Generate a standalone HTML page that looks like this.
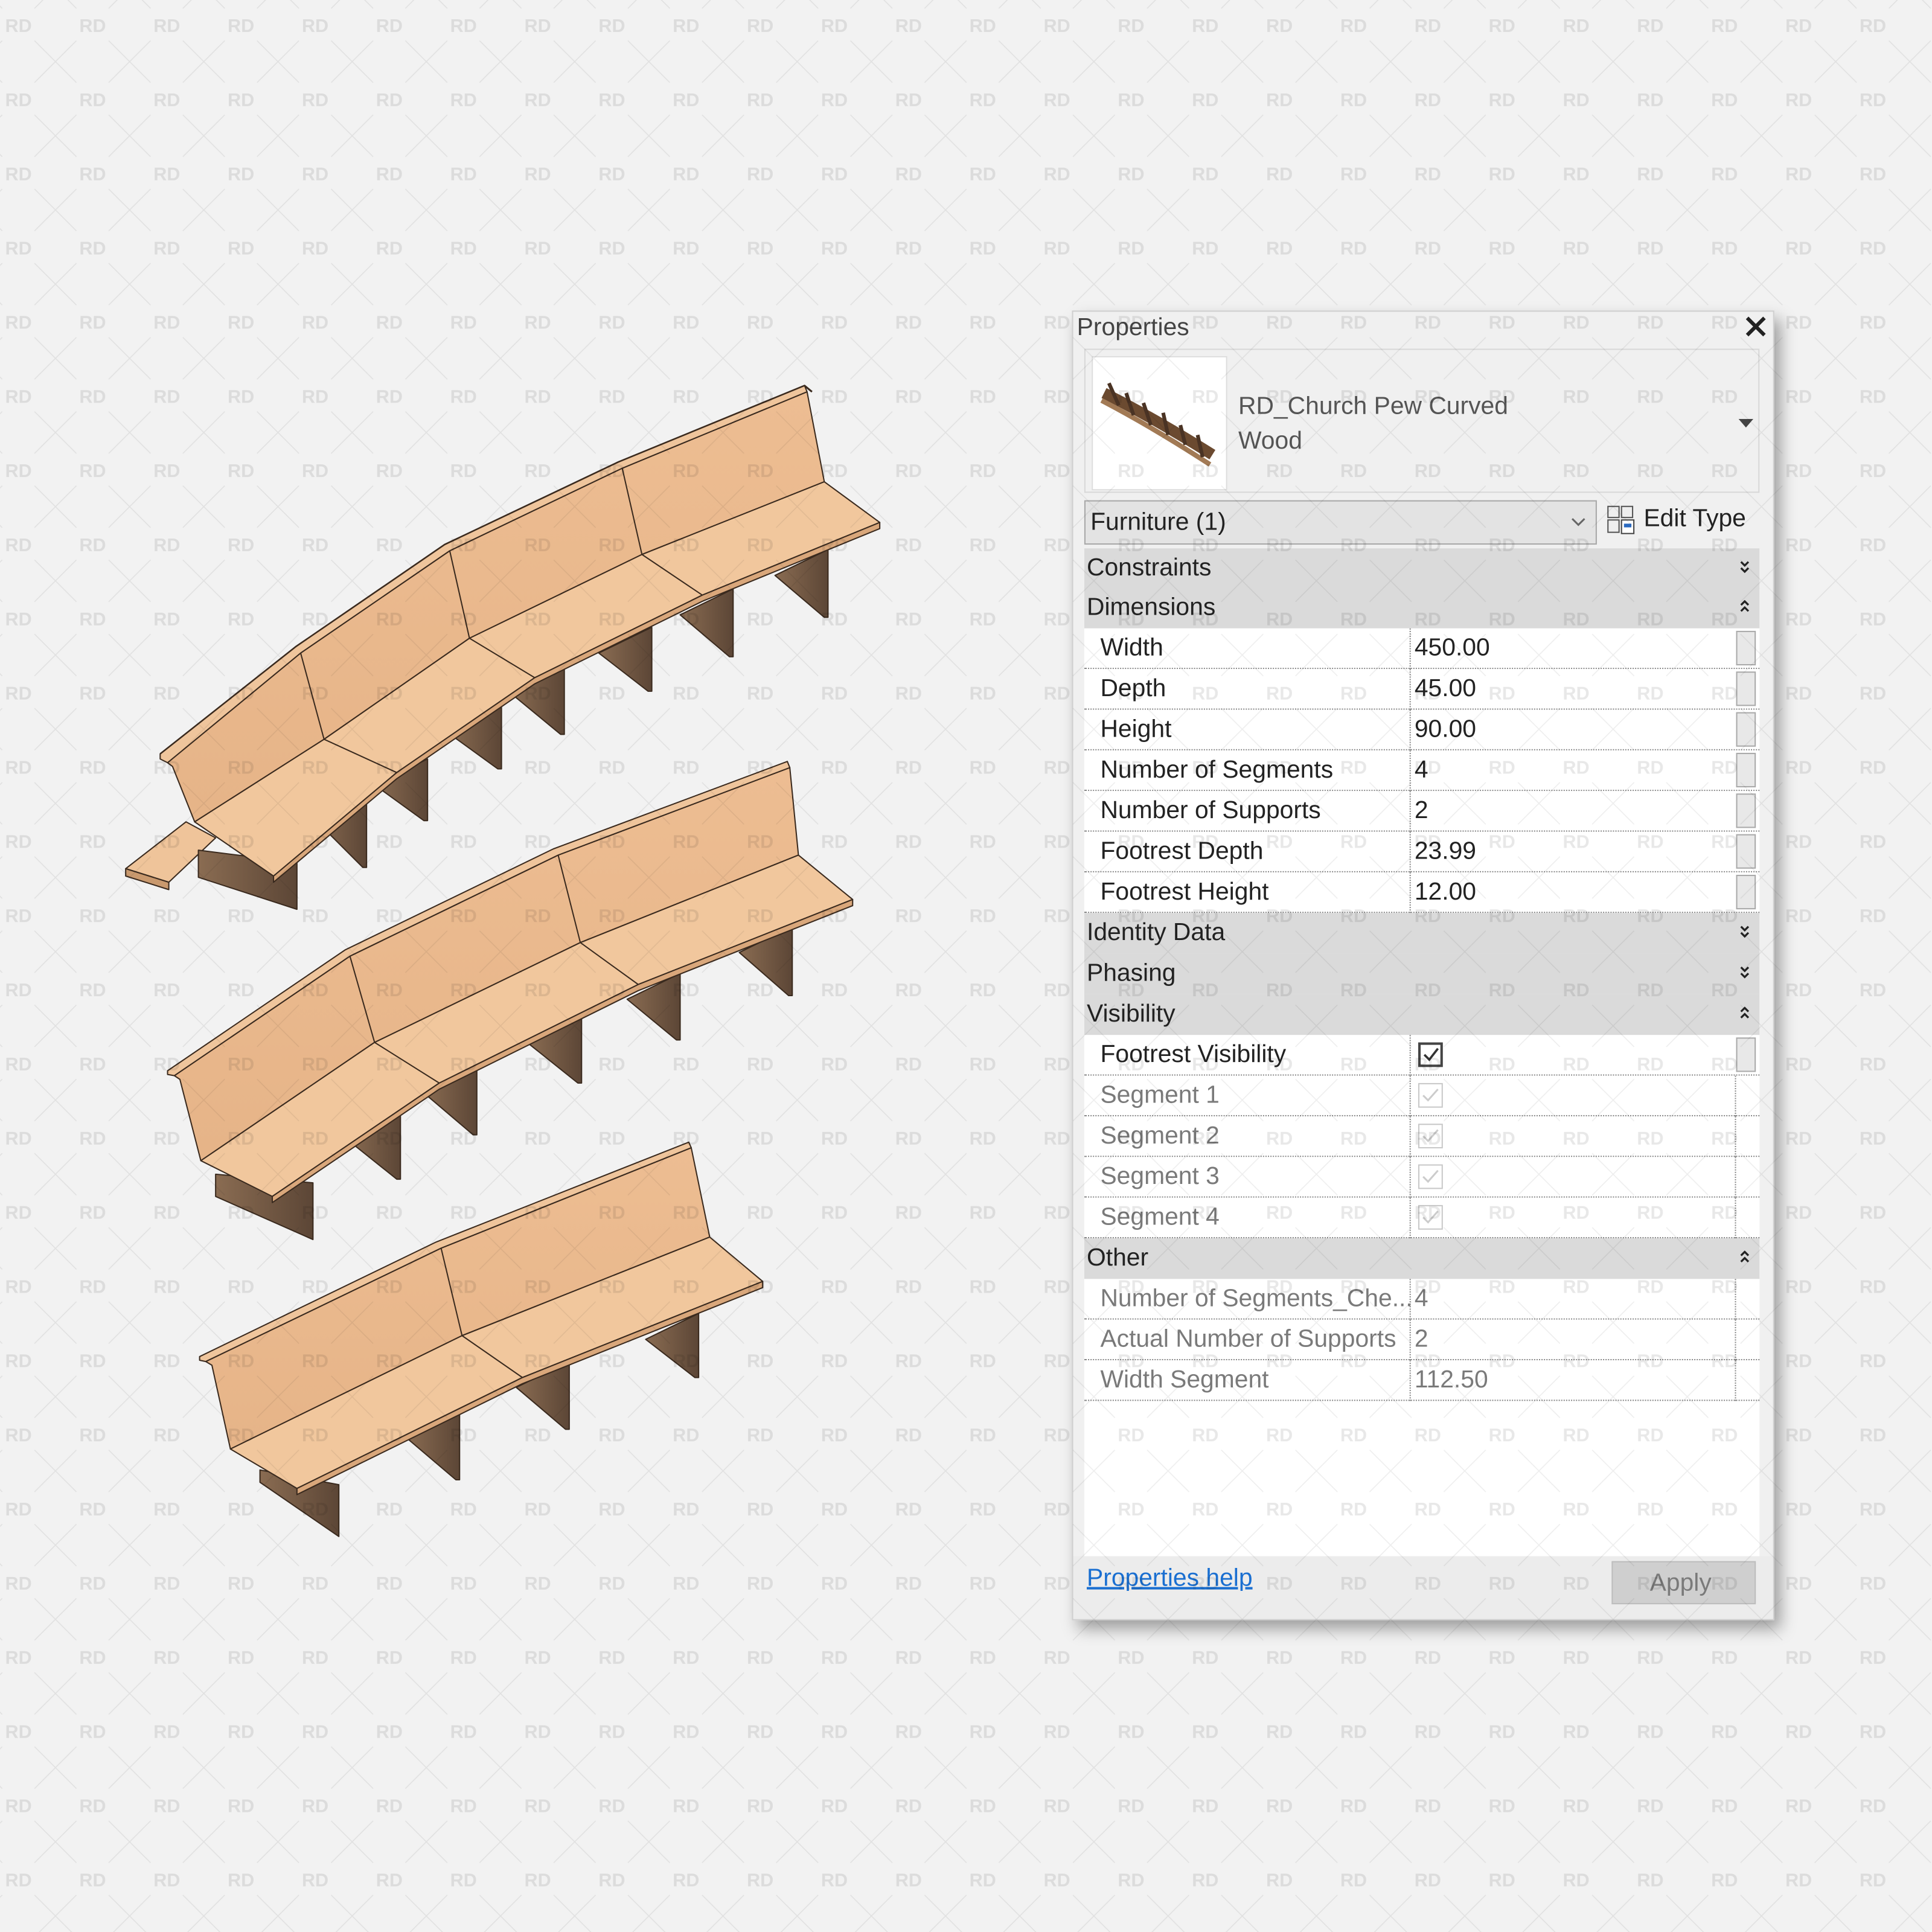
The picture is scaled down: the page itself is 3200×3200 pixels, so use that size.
<!DOCTYPE html>
<html><head><meta charset="utf-8">
<style>
html,body{margin:0;padding:0;background:#f2f2f2;}
body{width:3200px;height:3200px;overflow:hidden;position:relative;}
#stage{position:absolute;left:0;top:0;width:1568px;height:1568px;transform:scale(2.040816);transform-origin:0 0;font-family:"Liberation Sans",sans-serif;}
.a{position:absolute;}
.t{position:absolute;font-size:20px;line-height:33px;white-space:nowrap;color:#222;}
.cat{position:absolute;left:880px;width:548px;height:33px;background:#dadada;}
.cat span{position:absolute;left:2px;top:0;font-size:20px;line-height:33px;color:#222;}
.cat svg{position:absolute;right:8px;top:10px;}
.row{position:absolute;left:880px;width:548px;height:33px;background:#fff;border-bottom:1px dotted #888;box-sizing:border-box;}
.row .l{position:absolute;left:13px;top:0;font-size:20px;line-height:32px;color:#222;}
.row .v{position:absolute;left:268px;top:0;font-size:20px;line-height:32px;color:#222;}
.row .d{position:absolute;left:264px;top:0;height:33px;border-left:1px dotted #888;}
.row .d2{position:absolute;left:528px;top:0;height:33px;border-left:1px dotted #888;}
.row .sb{position:absolute;left:529px;top:2px;width:16px;height:28px;background:#e8e8e8;border:1px solid #aaa;box-sizing:border-box;}
.g .l,.g .v{color:#7a7a7a;}
.cb{position:absolute;left:271px;top:6px;width:20px;height:20px;box-sizing:border-box;border:2px solid #444;}
.cb.g2{border:1.5px solid #c8c8c8;}
</style></head>
<body>
<div id="stage">
<!-- pews -->
<svg class="a" style="left:0;top:0" width="1568" height="1568" viewBox="0 0 1568 1568">
<defs>
<linearGradient id="leg" x1="0" y1="0" x2="1" y2="0"><stop offset="0" stop-color="#8a6c52"/><stop offset="1" stop-color="#5c4636"/></linearGradient>
<linearGradient id="back" x1="0" y1="0" x2="0" y2="1"><stop offset="0" stop-color="#edbd92"/><stop offset="1" stop-color="#e6b488"/></linearGradient>
</defs>
<g stroke="#3a2a1e" stroke-width="1" stroke-linejoin="round">
<!-- pew 1 -->
<polygon points="102,705 151,667 175,680 137,716" fill="#efc49a"/>
<polygon points="102,705 137,716 137,722 102,711" fill="#c9996e"/>
<polygon points="161,690 241,700 241,738 161,712" fill="url(#leg)"/>
<g fill="url(#leg)">
<polygon points="254.5,664 297.5,643 297.5,704 294.5,704"/>
<polygon points="304,637 347,616 347,666 344,666"/>
<polygon points="364,595 407,574 407,624 404,624"/>
<polygon points="415,563 458,542 458,596 455,596"/>
<polygon points="486,530 529,509 529,561 526,561"/>
<polygon points="552,499 595,478 595,533 592,533"/>
<polygon points="629,467 672,446 672,501 669,501"/>
</g>
<polygon points="136,619 244,530 365,447 505,380 655,318 669,391 521,450 381,518 263,600 158,667 140,622" fill="url(#back)"/>
<polyline points="130,612 240,525 361,442 502,375 653,313 659,318" fill="none" stroke-width="1.5"/>
<polygon points="130,612 240,525 361,442 502,375 653,313 655,318 505,380 365,447 244,530 136,619 130,616" fill="#efc59c"/>
<line x1="244" y1="530" x2="263" y2="600"/><line x1="365" y1="447" x2="381" y2="518"/><line x1="505" y1="380" x2="521" y2="450"/>
<polygon points="158,667 263,600 381,518 521,450 669,391 714,424 570,483 434,550 322,627 222,711" fill="#f1c79d"/>
<polygon points="222,711 322,627 434,550 570,483 714,424 714,429 570,488 434,555 322,632 222,716" fill="#d9a77b"/>
<line x1="263" y1="600" x2="322" y2="627"/><line x1="381" y1="518" x2="434" y2="550"/><line x1="521" y1="450" x2="570" y2="483"/>
<!-- pew 2 -->
<polygon points="175,953 254,960 254,1006 175,971" fill="url(#leg)"/>
<g fill="url(#leg)">
<polygon points="282,925 325,904 325,957 322,957"/>
<polygon points="344,887 387,866 387,921 384,921"/>
<polygon points="429,847 472,826 472,879 469,879"/>
<polygon points="509,811 552,790 552,844 549,844"/>
<polygon points="600,773 643,752 643,808 640,808"/>
</g>
<polygon points="141.5,873 284,776 453,694 641,623 648,694 471,765 304,846 163,942 146,876" fill="url(#back)"/>
<polygon points="136,869 280,771 449,689 639,618 641,623 453,694 284,776 141.5,873 136,872" fill="#efc59c"/>
<line x1="284" y1="776" x2="304" y2="846"/><line x1="453" y1="694" x2="471" y2="765"/>
<polygon points="163,942 304,846 471,765 648,694 692,730 518,799 356.5,879 221,971" fill="#f1c79d"/>
<polygon points="221,971 356.5,879 518,799 692,730 692,735 518,804 356.5,884 221,976" fill="#d9a77b"/>
<line x1="304" y1="846" x2="356.5" y2="879"/><line x1="471" y1="765" x2="518" y2="799"/>
<!-- pew 3 -->
<polygon points="211,1193 275,1205 275,1247 211,1203" fill="url(#leg)"/>
<g fill="url(#leg)">
<polygon points="330,1167 373,1146 373,1201 370,1201"/>
<polygon points="419,1126 462,1105 462,1160 459,1160"/>
<polygon points="524,1087 567,1066 567,1118 564,1118"/>
</g>
<polygon points="167,1105 358,1013 561,931.5 576,1004 375,1084 187,1176 172,1108" fill="url(#back)"/>
<polygon points="162,1101 354,1008 559,927 561,931.5 358,1013 167,1105 162,1104" fill="#efc59c"/>
<line x1="358" y1="1013" x2="375" y2="1084"/>
<polygon points="187,1176 375,1084 576,1004 619,1040 424,1118 241,1208" fill="#f1c79d"/>
<polygon points="241,1208 424,1118 619,1040 619,1045 424,1123 241,1213" fill="#d9a77b"/>
<line x1="375" y1="1084" x2="424" y2="1118"/>
</g>
</svg>

<!-- panel -->
<div class="a" style="left:870px;top:252px;width:570px;height:1063px;background:#f0f0f0;border:1px solid #cfcfcf;box-sizing:border-box;box-shadow:5px 7px 12px rgba(0,0,0,.35);"></div>
<div class="t" style="left:874px;top:250px;color:#444;">Properties</div>
<svg class="a" style="left:1415px;top:255px" width="20" height="20"><path d="M3 3L17 17M17 3L3 17" stroke="#222" stroke-width="3"/></svg>
<div class="a" style="left:880px;top:283px;width:548px;height:117px;border:1px solid #d8d8d8;box-sizing:border-box;"></div>
<div class="a" style="left:886px;top:289px;width:110px;height:109px;background:#fff;border:1px solid #ddd;box-sizing:border-box;"></div>
<svg class="a" style="left:886px;top:289px" width="110" height="109">
<path d="M10 30 Q50 50 98 80" stroke="#6b4a30" stroke-width="9" fill="none"/>
<path d="M8 36 Q50 58 96 88" stroke="#a27a55" stroke-width="4" fill="none"/>
<path d="M14 22 L22 40 M28 30 L34 48 M42 38 L48 56 M58 46 L62 64 M72 56 L76 72 M86 64 L90 82" stroke="#4a3324" stroke-width="3"/>
</svg>
<div class="t" style="left:1005px;top:314px;color:#555;">RD_Church Pew Curved</div>
<div class="t" style="left:1005px;top:342px;color:#555;">Wood</div>
<svg class="a" style="left:1411px;top:340px" width="12" height="8"><path d="M0 0H12L6 7Z" fill="#444"/></svg>
<div class="a" style="left:880px;top:406px;width:416px;height:36px;background:#e3e3e3;border:1px solid #a8a8a8;box-sizing:border-box;"></div>
<div class="t" style="left:885px;top:408px;">Furniture (1)</div>
<svg class="a" style="left:1275px;top:420px" width="12" height="8"><path d="M1 1L6 6L11 1" stroke="#666" stroke-width="1.5" fill="none"/></svg>
<svg class="a" style="left:1304px;top:410px" width="24" height="24">
<rect x="1" y="1" width="9" height="9" fill="#eee" stroke="#555"/><rect x="12" y="1" width="9" height="9" fill="#eee" stroke="#555"/>
<rect x="1" y="12" width="9" height="10" fill="#eee" stroke="#555"/><rect x="12" y="12" width="10" height="11" fill="#fff" stroke="#444"/>
<rect x="14" y="15" width="6" height="3" fill="#2a6ac0"/>
</svg>
<div class="t" style="left:1334px;top:405px;">Edit Type</div>

<!-- grid -->
<div class="a" style="left:880px;top:445px;width:548px;height:818px;background:#fff;"></div>
<div class="cat" style="top:445px"><span>Constraints</span><svg width="8" height="12"><path d="M1 1L4 4L7 1M1 6L4 9L7 6" stroke="#222" stroke-width="1.6" fill="none"/></svg></div>
<div class="cat" style="top:477px"><span>Dimensions</span><svg width="8" height="12"><path d="M1 4L4 1L7 4M1 9L4 6L7 9" stroke="#222" stroke-width="1.6" fill="none"/></svg></div>
<div class="row" style="top:510px"><span class="l">Width</span><span class="d"></span><span class="v">450.00</span><span class="sb"></span></div>
<div class="row" style="top:543px"><span class="l">Depth</span><span class="d"></span><span class="v">45.00</span><span class="sb"></span></div>
<div class="row" style="top:576px"><span class="l">Height</span><span class="d"></span><span class="v">90.00</span><span class="sb"></span></div>
<div class="row" style="top:609px"><span class="l">Number of Segments</span><span class="d"></span><span class="v">4</span><span class="sb"></span></div>
<div class="row" style="top:642px"><span class="l">Number of Supports</span><span class="d"></span><span class="v">2</span><span class="sb"></span></div>
<div class="row" style="top:675px"><span class="l">Footrest Depth</span><span class="d"></span><span class="v">23.99</span><span class="sb"></span></div>
<div class="row" style="top:708px"><span class="l">Footrest Height</span><span class="d"></span><span class="v">12.00</span><span class="sb"></span></div>
<div class="cat" style="top:741px"><span>Identity Data</span><svg width="8" height="12"><path d="M1 1L4 4L7 1M1 6L4 9L7 6" stroke="#222" stroke-width="1.6" fill="none"/></svg></div>
<div class="cat" style="top:774px"><span>Phasing</span><svg width="8" height="12"><path d="M1 1L4 4L7 1M1 6L4 9L7 6" stroke="#222" stroke-width="1.6" fill="none"/></svg></div>
<div class="cat" style="top:807px"><span>Visibility</span><svg width="8" height="12"><path d="M1 4L4 1L7 4M1 9L4 6L7 9" stroke="#222" stroke-width="1.6" fill="none"/></svg></div>
<div class="row" style="top:840px"><span class="l">Footrest Visibility</span><span class="d"></span><span class="cb"><svg width="16" height="16" style="position:absolute;left:0;top:0"><path d="M3 8L7 12L14 3" stroke="#333" stroke-width="1.8" fill="none"/></svg></span><span class="sb"></span></div>
<div class="row g" style="top:873px"><span class="l">Segment 1</span><span class="d"></span><span class="cb g2"><svg width="17" height="17" style="position:absolute;left:0;top:0"><path d="M3 9L7 13L15 4" stroke="#ccc" stroke-width="1.5" fill="none"/></svg></span><span class="d2"></span></div>
<div class="row g" style="top:906px"><span class="l">Segment 2</span><span class="d"></span><span class="cb g2"><svg width="17" height="17" style="position:absolute;left:0;top:0"><path d="M3 9L7 13L15 4" stroke="#ccc" stroke-width="1.5" fill="none"/></svg></span><span class="d2"></span></div>
<div class="row g" style="top:939px"><span class="l">Segment 3</span><span class="d"></span><span class="cb g2"><svg width="17" height="17" style="position:absolute;left:0;top:0"><path d="M3 9L7 13L15 4" stroke="#ccc" stroke-width="1.5" fill="none"/></svg></span><span class="d2"></span></div>
<div class="row g" style="top:972px"><span class="l">Segment 4</span><span class="d"></span><span class="cb g2"><svg width="17" height="17" style="position:absolute;left:0;top:0"><path d="M3 9L7 13L15 4" stroke="#ccc" stroke-width="1.5" fill="none"/></svg></span><span class="d2"></span></div>
<div class="cat" style="top:1005px"><span>Other</span><svg width="8" height="12"><path d="M1 4L4 1L7 4M1 9L4 6L7 9" stroke="#222" stroke-width="1.6" fill="none"/></svg></div>
<div class="row g" style="top:1038px"><span class="l">Number of Segments_Che...</span><span class="d"></span><span class="v">4</span><span class="d2"></span></div>
<div class="row g" style="top:1071px"><span class="l">Actual Number of Supports</span><span class="d"></span><span class="v">2</span><span class="d2"></span></div>
<div class="row g" style="top:1104px"><span class="l">Width Segment</span><span class="d"></span><span class="v">112.50</span><span class="d2"></span></div>

<!-- footer -->
<div class="a" style="left:871px;top:1263px;width:568px;height:51px;background:#ececec;"></div>
<div class="t" style="left:882px;top:1265px;color:#1a6fd1;text-decoration:underline;">Properties help</div>
<div class="a" style="left:1308px;top:1267px;width:117px;height:35px;background:#cfcfcf;border:1px solid #bdbdbd;box-sizing:border-box;"></div>
<div class="t" style="left:1339px;top:1269px;color:#7a7a7a;">Apply</div>

<!-- watermark overlay -->
<svg class="a" style="left:0;top:0;pointer-events:none" width="1568" height="1568">
<defs>
<pattern id="wm" x="0" y="0" width="60.2" height="60.2" patternUnits="userSpaceOnUse">
<text x="15" y="26" text-anchor="middle" font-family="Liberation Sans, sans-serif" font-weight="bold" font-size="15" fill="rgba(0,0,0,0.09)">RD</text>
<g stroke="rgba(0,0,0,0.065)" stroke-width="0.8">
<path d="M28 33L62 67M28 67L62 33"/>
<path d="M-32.2 33L1.8 67M-32.2 67L1.8 33"/>
<path d="M28 -27.2L62 6.8M28 6.8L62 -27.2"/>
<path d="M-32.2 -27.2L1.8 6.8M-32.2 6.8L1.8 -27.2"/>
</g>
</pattern>
</defs>
<rect width="1568" height="1568" fill="url(#wm)"/>
</svg>
</div>
</body></html>
